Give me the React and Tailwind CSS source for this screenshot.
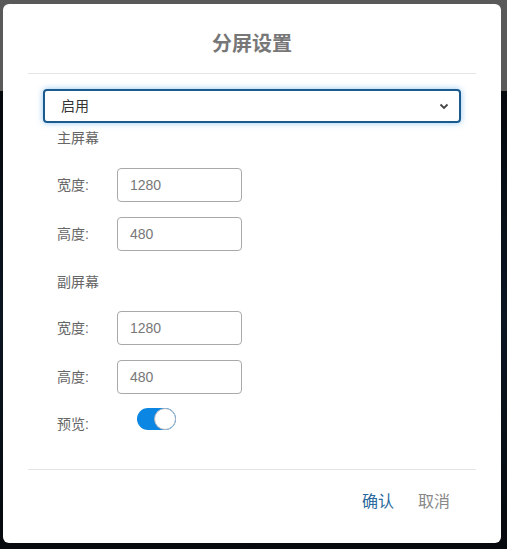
import React from "react";

const font = { fontFamily: '"Liberation Sans","Noto Sans CJK SC",sans-serif' };

function Field({ label, value }) {
  return (
    <div className="flex items-center pl-[14px]">
      <span className="w-[60px] text-[14px] text-[#666]">{label}</span>
      <div className="w-[125px] h-[34px] border border-[#a9a9a9] rounded-[4px] flex items-center px-[12px] text-[14px] text-[#777]">
        {value}
      </div>
    </div>
  );
}

export default function App() {
  return (
    <div className="relative w-[507px] h-[549px] overflow-hidden" style={font}>
      <div className="flex flex-col h-full">
        <div className="h-[91px] bg-[#595959]" />
        <div className="flex-1 bg-gradient-to-b from-[#05080c] via-[#0b1622] to-[#06090d]" />
      </div>
      <div className="absolute left-[3px] top-[4px] w-[498px] h-[539px] bg-white rounded-[6px] flex flex-col">
        <div className="mx-[25px] pt-[26px] pb-[15px] border-b border-[#e5e5e5] text-center text-[20px] leading-[28px] font-bold text-[#777]">
          分屏设置
        </div>
        <div className="px-[40px] flex flex-col">
          <div className="mt-[15px] h-[34px] border-2 border-[#1a5a8e] rounded-[4px] shadow-[0_0_6px_rgba(102,175,233,0.7)] flex items-center justify-between pl-[16px] pr-[10px] text-[14px] text-[#333]">
            <span>启用</span>
            <svg width="10" height="7" viewBox="0 0 10 7">
              <path d="M1.5 1.5 L5 5 L8.5 1.5" fill="none" stroke="#444" strokeWidth="1.8" />
            </svg>
          </div>
          <div className="mt-[5px] pl-[14px] text-[14px] leading-[20px] text-[#666]">主屏幕</div>
          <div className="mt-[20px] flex flex-col gap-[15px]">
            <Field label="宽度:" value="1280" />
            <Field label="高度:" value="480" />
          </div>
          <div className="mt-[21px] pl-[14px] text-[14px] leading-[20px] text-[#666]">副屏幕</div>
          <div className="mt-[19px] flex flex-col gap-[15px]">
            <Field label="宽度:" value="1280" />
            <Field label="高度:" value="480" />
          </div>
          <div className="mt-[14px] flex items-start pl-[14px]">
            <span className="w-[60px] text-[14px] text-[#666] mt-[6px]">预览:</span>
            <div className="ml-[20px] w-[39px] h-[22px] rounded-full bg-[#0b86e3] relative">
              <div className="absolute right-0 top-0 w-[22px] h-[22px] rounded-full bg-white border border-[#aab4c0]" />
            </div>
          </div>
        </div>
        <div className="mx-[25px] mt-[34px] border-t border-[#e5e5e5]" />
        <div className="flex justify-end items-center pr-[51px] pt-[20px] gap-[24px] text-[16px]">
          <span className="text-[#2a6a9c]">确认</span>
          <span className="text-[#888]">取消</span>
        </div>
      </div>
    </div>
  );
}
